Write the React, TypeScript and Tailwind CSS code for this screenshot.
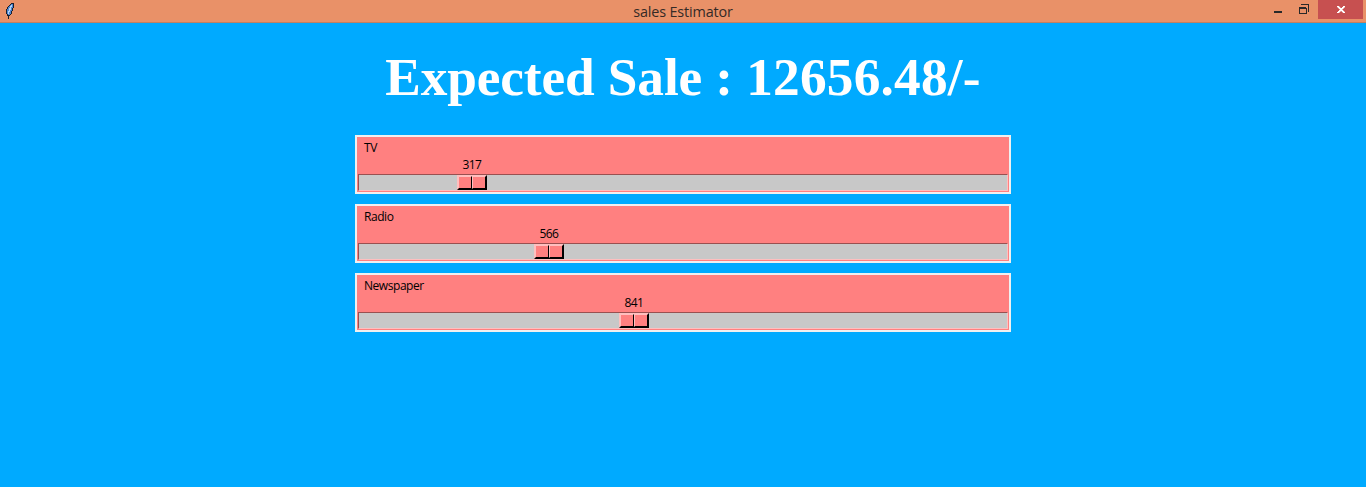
type Channel = { name: string; value: number; offset: number };

const channels: Channel[] = [
  { name: 'TV', value: 317, offset: 98 },
  { name: 'Radio', value: 566, offset: 175 },
  { name: 'Newspaper', value: 841, offset: 260 },
];

function Feather() {
  return (
    <svg width="10" height="16" viewBox="0 0 10 16" shapeRendering="crispEdges">
      <path d="M6 0h3v5H8v3H7v3H6v1H5v1H4v3H3v-3H2v-2H1V6h1V4h1V3h1V2h1V1h1z" fill="#1c1f2b" />
      <path d="M6 1h2v4H7v3H6v3H5v1H3v-1H2V6h1V4h1V3h1V2h1z" fill="#4f86cf" />
      <path d="M6 2h1v2H6v3H5v2H4v2H3V8h1V5h1V3h1z" fill="#b8d3f2" />
    </svg>
  );
}

function TitleBar() {
  return (
    <header className="flex h-[23px] items-start border-b border-[#c08062] bg-[#e99168]">
      <div className="w-[100px] shrink-0 pl-[5px] pt-[3px]"><Feather /></div>
      <div className="flex-1 text-center font-['Open_Sans',sans-serif] text-[14.4px] leading-[23px] text-[#342a26]">
        <span className="inline-block tracking-[-0.15px]">sales Estimator</span>
      </div>
      <div className="flex w-[100px] shrink-0 justify-end pr-[3px]">
        <svg width="52" height="19" viewBox="0 0 52 19" shapeRendering="crispEdges" fill="none" stroke="#292929">
          <path d="M8 12h8" strokeWidth="2" />
          <path d="M33 8.5h7v5h-7z" />
          <path d="M33 7.5h7M35 4.5h7.5V12" />
        </svg>
        <button aria-label="Close" className="flex h-[19px] w-[45px] items-center justify-center bg-[#c75050]">
          <svg width="8" height="7" viewBox="0 0 8 7" className="ml-px" shapeRendering="crispEdges">
            <path d="M0 0h2v1h1v1h2V1h1V0h2v1H7v1H6v1H5v1h1v1h1v1h1v1H6V6H5V5H3v1H2v1H0V6h1V5h1V4h1V3H2V2H1V1H0z" fill="#fff" stroke="#fff" strokeWidth="0.3" />
          </svg>
        </button>
      </div>
    </header>
  );
}

const half = 'w-[14px] border border-t-[#ffbfbf] border-l-[#ffbfbf] border-b-black border-r-black bg-[#ff8080]';

function Scale({ name, value, offset }: Channel) {
  return (
    <div className="flex h-[59px] flex-col border-2 border-[#f0f0f0] bg-[#ff8080] px-px font-['Open_Sans',sans-serif] text-[12px] text-black">
      <div className="h-[20px] pl-[6px] leading-[21px] tracking-[-0.45px]">{name}</div>
      <div className="flex h-[17px]" style={{ paddingLeft: offset }}>
        <span className="w-[32px] text-center leading-[15px]"><span className="inline-block tracking-[-0.6px]">{value}</span></span>
      </div>
      <div className="flex h-[17px] border border-t-[#995050] border-l-[#995050] border-r-[#ffbfbf] border-b-[#ffbfbf] bg-[#c8c8c8]">
        <div style={{ width: offset }} />
        <div className="flex h-[15px] w-[30px] border border-t-[#ffbfbf] border-l-[#ffbfbf] border-b-black border-r-black">
          <div className={half} />
          <div className={half} />
        </div>
      </div>
    </div>
  );
}

export default function App() {
  return (
    <div className="flex h-screen flex-col bg-[#00aaff]">
      <TitleBar />
      <main className="flex flex-col items-center">
        <h1 className="h-[112px] whitespace-pre pt-[24px] font-['Liberation_Serif',serif] text-[53.33px] font-bold leading-[60px] text-white">
          <span className="tracking-[-0.12px]">Expected Sale : </span><span className="tracking-[0.2px]">12656.48/-</span>
        </h1>
        <div className="flex w-[656px] flex-col gap-[10px]">
          {channels.map((c) => <Scale key={c.name} {...c} />)}
        </div>
      </main>
    </div>
  );
}
